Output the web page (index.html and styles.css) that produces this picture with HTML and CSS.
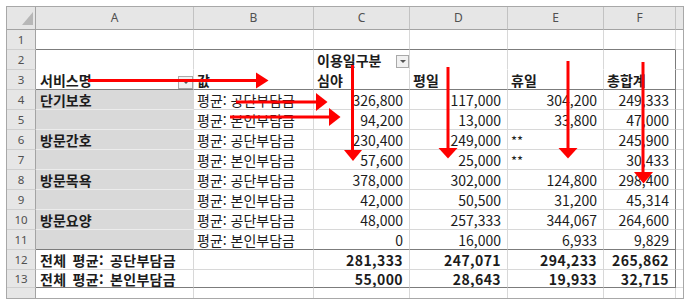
FILE: index.html
```html
<!DOCTYPE html>
<html lang="ko">
<head>
<meta charset="utf-8">
<title>피벗 테이블</title>
<link rel="stylesheet" href="styles.css">
</head>
<body>
<div class="page">
  <div class="sheet">
    <div class="grid">
      <!-- column headers -->
      <div class="corner"><span class="tri"></span></div>
      <div class="h">A</div><div class="h">B</div><div class="h">C</div><div class="h">D</div><div class="h">E</div><div class="h">F</div><div class="h g"></div>

      <!-- row 1 -->
      <div class="rn">1</div>
      <div class="dkb"></div><div class="dkb"></div><div class="dkb"></div><div class="dkb"></div><div class="dkb"></div><div class="dkb"></div><div class="g"></div>

      <!-- row 2 -->
      <div class="rn">2</div>
      <div class="nob"></div><div class="nob"></div>
      <div class="nob b pr0">이용일구분<span class="dd small"><i></i></span></div>
      <div class="nob"></div><div class="nob"></div><div class="nob dkr"></div><div class="g"></div>

      <!-- row 3 -->
      <div class="rn">3</div>
      <div class="dkb b pr0 a">서비스명<span class="dd big"><i></i></span></div>
      <div class="dkb b">값</div>
      <div class="dkb b">심야</div>
      <div class="dkb b">평일</div>
      <div class="dkb b">휴일</div>
      <div class="dkb dkr b">총합계</div>
      <div class="g"></div>

      <!-- row 4 -->
      <div class="rn">4</div>
      <div class="lbl b a">단기보호</div><div>평균: 공단부담금</div>
      <div class="num">326,800</div><div class="num">117,000</div><div class="num">304,200</div><div class="num dkr">249,333</div><div class="g"></div>

      <!-- row 5 -->
      <div class="rn">5</div>
      <div class="lbl a"></div><div>평균: 본인부담금</div>
      <div class="num">94,200</div><div class="num">13,000</div><div class="num">33,800</div><div class="num dkr">47,000</div><div class="g"></div>

      <!-- row 6 -->
      <div class="rn">6</div>
      <div class="lbl b a">방문간호</div><div>평균: 공단부담금</div>
      <div class="num">230,400</div><div class="num">249,000</div><div class="star">**</div><div class="num dkr">245,900</div><div class="g"></div>

      <!-- row 7 -->
      <div class="rn">7</div>
      <div class="lbl a"></div><div>평균: 본인부담금</div>
      <div class="num">57,600</div><div class="num">25,000</div><div class="star">**</div><div class="num dkr">30,433</div><div class="g"></div>

      <!-- row 8 -->
      <div class="rn">8</div>
      <div class="lbl b a">방문목욕</div><div>평균: 공단부담금</div>
      <div class="num">378,000</div><div class="num">302,000</div><div class="num">124,800</div><div class="num dkr">298,400</div><div class="g"></div>

      <!-- row 9 -->
      <div class="rn">9</div>
      <div class="lbl a"></div><div>평균: 본인부담금</div>
      <div class="num">42,000</div><div class="num">50,500</div><div class="num">31,200</div><div class="num dkr">45,314</div><div class="g"></div>

      <!-- row 10 -->
      <div class="rn">10</div>
      <div class="lbl b a">방문요양</div><div>평균: 공단부담금</div>
      <div class="num">48,000</div><div class="num">257,333</div><div class="num">344,067</div><div class="num dkr">264,600</div><div class="g"></div>

      <!-- row 11 -->
      <div class="rn">11</div>
      <div class="lbl a dkb"></div><div class="dkb">평균: 본인부담금</div>
      <div class="num dkb">0</div><div class="num dkb">16,000</div><div class="num dkb">6,933</div><div class="num dkb dkr">9,829</div><div class="g"></div>

      <!-- row 12 -->
      <div class="rn">12</div>
      <div class="b a tot">전체 평균: 공단부담금</div><div></div>
      <div class="num b">281,333</div><div class="num b">247,071</div><div class="num b">294,233</div><div class="num b dkr">265,862</div><div class="g"></div>

      <!-- row 13 -->
      <div class="rn">13</div>
      <div class="b a tot dkb">전체 평균: 본인부담금</div><div class="dkb"></div>
      <div class="num b dkb">55,000</div><div class="num b dkb">28,643</div><div class="num b dkb">19,933</div><div class="num b dkb dkr">32,715</div><div class="g"></div>

      <!-- row 14 (partial) -->
      <div class="rn last"></div>
      <div class="last"></div><div class="last"></div><div class="last"></div><div class="last"></div><div class="last"></div><div class="last"></div><div class="g last"></div>
    </div>
  </div>

  <svg class="arrows" width="692" height="303" viewBox="0 0 692 303" aria-hidden="true">
    <g stroke="#ff0000" stroke-width="3" fill="none">
      <line x1="88" y1="80.5" x2="258" y2="80.5"/>
      <line x1="236" y1="102" x2="318" y2="102"/>
      <line x1="230" y1="117" x2="331" y2="117"/>
      <line x1="352.5" y1="65" x2="352.5" y2="151"/>
      <line x1="448" y1="67" x2="448" y2="149"/>
      <line x1="568" y1="61" x2="568" y2="149"/>
      <line x1="643" y1="62" x2="643" y2="173"/>
    </g>
    <g fill="#ff0000">
      <polygon points="256,72.5 268.5,80.5 256,88.5"/>
      <polygon points="316,93 327.5,102 316,111"/>
      <polygon points="329,108 340.5,117 329,126"/>
      <polygon points="344,150 353,161 362,150"/>
      <polygon points="438.5,148 448,158.5 457.5,148"/>
      <polygon points="558.5,148 568,158.5 577.5,148"/>
      <polygon points="634,172 643.5,183.5 653,172"/>
    </g>
  </svg>
</div>
</body>
</html>
```

FILE: styles.css
```css
html, body {
  margin: 0;
  padding: 0;
  background: #ffffff;
}

.page {
  position: relative;
  width: 692px;
  height: 303px;
  overflow: hidden;
}

.sheet {
  margin: 6px 0 0 6px;
  width: 676px;
  border: 1px solid #a8a8a8;
}

.grid {
  display: grid;
  grid-template-columns: 29px 158px 120px 96px 98px 96px 72px 7px;
  grid-template-rows: 23px repeat(12, 20px) 18px 10px;
  font-family: "Noto Sans CJK KR", "Noto Sans", sans-serif;
  font-size: 14px;
  color: #1c1c1c;
  background: #ffffff;
}

.grid > div {
  box-sizing: border-box;
  border-right: 1px solid #d8d8d8;
  border-bottom: 1px solid #d8d8d8;
  display: flex;
  align-items: center;
  white-space: nowrap;
  overflow: hidden;
  padding: 1px 3px 0 3px;
  line-height: 1;
}

/* column headers */
.grid > .h {
  background: #e6e6e6;
  justify-content: center;
  color: #505050;
  font-family: "Noto Sans", sans-serif;
  font-size: 12px;
  border-right-color: #c2c2c2;
  border-bottom-color: #a3a3a3;
  padding: 0;
}

.grid > .corner {
  background: #e6e6e6;
  border-right-color: #a3a3a3;
  border-bottom-color: #a3a3a3;
  justify-content: flex-end;
  align-items: flex-end;
  padding: 0 2px 4px 0;
}

.tri {
  width: 0;
  height: 0;
  border-left: 11px solid transparent;
  border-bottom: 13px solid #b7b7b7;
}

/* row numbers */
.grid > .rn {
  background: #e6e6e6;
  justify-content: center;
  color: #505050;
  font-family: "Noto Sans", sans-serif;
  font-size: 11.5px;
  border-right-color: #a3a3a3;
  border-bottom-color: #cfcfcf;
  padding: 0;
}

.grid > .g {
  border-right: none;
}

.grid > .last {
  border-bottom: none;
}

.grid > .a {
  padding-left: 4px;
}

.grid > .b {
  font-weight: 700;
}

.grid > .tot {
  letter-spacing: 0.3px;
  word-spacing: 2px;
}

.grid > .lbl {
  background: #d9d9d9;
  border-bottom-color: #ececec;
}

.grid > .num {
  justify-content: flex-end;
  padding-right: 6px;
}

.grid > .num.b {
  letter-spacing: 0.4px;
}

.grid > .star {
  padding-left: 3px;
  font-size: 13px;
}

/* pivot table outline */
.grid > .dkb {
  border-bottom-color: #7c7c7c;
}

.grid > .dkr {
  border-right-color: #7c7c7c;
}

.grid > .nob {
  border-bottom-color: #ffffff;
}

.grid > .pr0 {
  padding-right: 0;
}

/* filter dropdown buttons */
.dd {
  margin-left: auto;
  align-self: flex-end;
  box-sizing: border-box;
  border: 1px solid #a9a9a9;
  background: #f1f1f1;
  display: flex;
  align-items: center;
  justify-content: center;
}

.dd.small {
  width: 13px;
  height: 13px;
  margin-bottom: 1px;
}

.dd.big {
  width: 15px;
  height: 13px;
  margin-bottom: 0;
}

.dd i {
  display: block;
  width: 0;
  height: 0;
  border-left: 3px solid transparent;
  border-right: 3px solid transparent;
  border-top: 3px solid #555555;
}

/* red annotation arrows drawn over the sheet */
.arrows {
  position: absolute;
  left: 0;
  top: 0;
  pointer-events: none;
}
```
